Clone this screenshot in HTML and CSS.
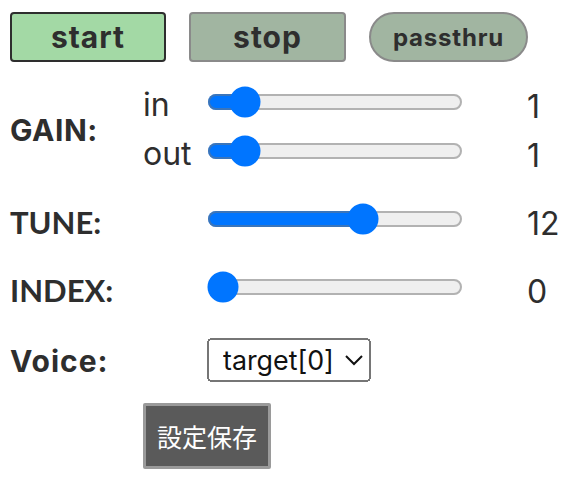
FILE: index.html
```html
<!DOCTYPE html>
<html lang="ja">
<head>
    <meta charset="UTF-8">
    <title>Voice Changer</title>
    <link rel="stylesheet" href="styles.css">
</head>
<body>
    <div class="toolbar">
        <button class="btn btn-start" id="startBtn">start</button>
        <button class="btn btn-stop" id="stopBtn">stop</button>
        <button class="btn btn-pass" id="passBtn">passthru</button>
    </div>

    <div class="controls">
        <div class="row row-gain">
            <div class="label gain-label">GAIN:</div>
            <div class="sub">in</div>
            <div class="cell"><input class="slider" type="range" min="0" max="10" value="1" id="gainIn"></div>
            <div class="value">1</div>
            <div class="sub">out</div>
            <div class="cell"><input class="slider" type="range" min="0" max="10" value="1" id="gainOut"></div>
            <div class="value">1</div>
        </div>

        <div class="row">
            <div class="label label-alt">TUNE:</div>
            <div></div>
            <div class="cell"><input class="slider" type="range" min="-8" max="24" value="12" id="tune"></div>
            <div class="value">12</div>
        </div>

        <div class="row">
            <div class="label label-alt">INDEX:</div>
            <div></div>
            <div class="cell"><input class="slider" type="range" min="0" max="10" value="0" id="index"></div>
            <div class="value">0</div>
        </div>

        <div class="row row-voice">
            <div class="label label-voice">Voice:</div>
            <div></div>
            <div class="cell">
                <select class="voice-select" id="voice">
                    <option>target[0]</option>
                    <option>target[1]</option>
                </select>
            </div>
        </div>

        <div class="row row-save">
            <div></div>
            <button class="btn-save" id="saveBtn">設定保存</button>
        </div>
    </div>
</body>
</html>
```

FILE: styles.css
```css
body {
    font-family: Inter, "Noto Sans", sans-serif;
    color: #2e2e2e;
    margin: 8px;
    background: #fff;
}
.toolbar {
    display: flex;
    gap: 23px;
    padding: 4px 0 0 2px;
}
.btn {
    font-family: Inter, sans-serif;
    font-weight: 700;
    font-size: 30px;
    letter-spacing: 1px;
    color: #2e2e2e;
    width: 156px;
    height: 50px;
    padding: 0;
    border-radius: 4px;
    cursor: pointer;
}
.btn-start {
    background: #a3d9a5;
    border: 2px solid #2e2e2e;
}
.btn-stop {
    width: 157px;
    background: #a1b5a1;
    border: 2px solid #8a8a8a;
}
.btn-pass {
    width: 159px;
    background: #a1b5a1;
    border: 2px solid #8a8a8a;
    border-radius: 25px;
    font-size: 24px;
    letter-spacing: 0.8px;
}
.controls {
    display: flex;
    flex-direction: column;
    gap: 19px;
    margin-top: 15px;
}
.row {
    display: grid;
    grid-template-columns: 135px 64px 320px auto;
    grid-auto-rows: 49px;
    align-items: center;
}
.label {
    font-weight: 700;
    font-size: 30px;
    letter-spacing: 0.5px;
    padding-left: 2px;
}
.label-alt {
    font-family: Lato, sans-serif;
    font-size: 31px;
    letter-spacing: 0;
    padding-top: 6px;
}
.label-voice {
    letter-spacing: 1px;
    padding-top: 2px;
}
.gain-label {
    grid-row: span 2;
    padding-top: 8px;
}
.sub {
    font-size: 32px;
    padding-top: 5px;
}
.value {
    font-size: 32px;
    padding-top: 9px;
}
.cell {
    display: flex;
    align-items: center;
}
.slider {
    zoom: 2;
    width: 128px;
    margin: 0;
}
.voice-select {
    zoom: 2;
    font-family: Inter, sans-serif;
    font-size: 13.4px;
    color: #111;
    width: 82px;
    height: 22px;
    margin: 0;
    padding: 0 0 0 3px;
}
.row-voice {
    margin-top: 5px;
}
.row-save {
    grid-auto-rows: auto;
}
.btn-save {
    grid-column: 2 / span 2;
    justify-self: start;
    font-family: "Noto Sans CJK JP", sans-serif;
    font-size: 25px;
    color: #fff;
    background: #5a5a5a;
    border: 3px solid #9a9a9a;
    border-radius: 2px;
    padding: 12px 11px;
    cursor: pointer;
}
```
